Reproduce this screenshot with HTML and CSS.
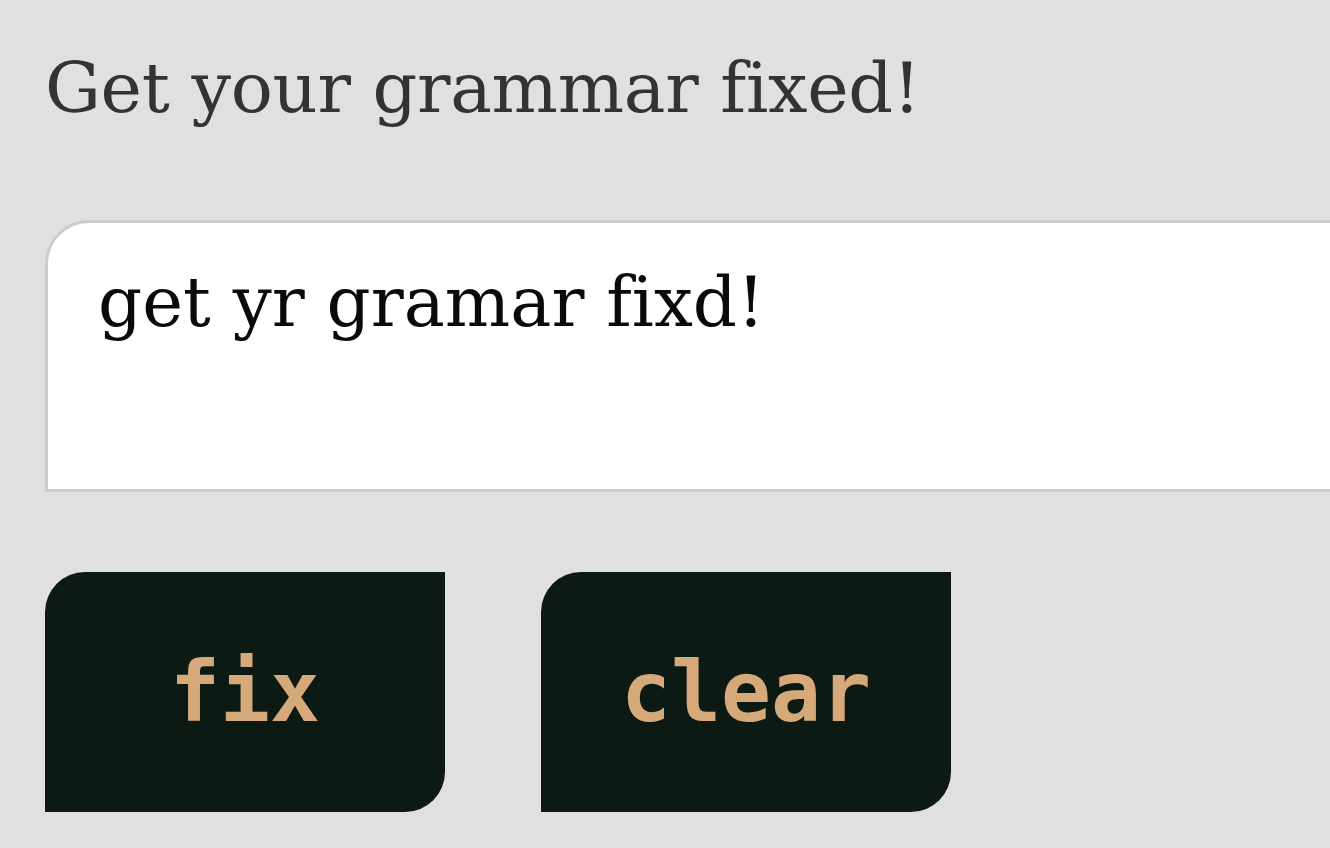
FILE: index.html
```html
<!DOCTYPE html>
<html lang="en">
<head>
<meta charset="utf-8">
<title>Grammar fixer</title>
<link rel="stylesheet" href="styles.css">
</head>
<body>
<main class="app">
  <h1 class="title">Get your grammar fixed!</h1>
  <textarea class="input" spellcheck="false">get yr gramar fixd!</textarea>
  <div class="actions">
    <button class="btn" type="button">fix</button>
    <button class="btn" type="button">clear</button>
  </div>
</main>
</body>
</html>
```

FILE: styles.css
```css
html, body {
  margin: 0;
  padding: 0;
  overflow: hidden;
  background: #e0e0e0;
}

.app {
  display: flex;
  flex-direction: column;
  align-items: flex-start;
  padding: 38px 0 0 45px;
}

.title {
  margin: 0;
  font-family: "DejaVu Serif", serif;
  font-weight: normal;
  font-size: 70px;
  line-height: 100px;
  color: #333333;
  letter-spacing: -0.3px;
  font-variant-ligatures: none;
}

.input {
  box-sizing: border-box;
  margin-top: 82px;
  width: 1320px;
  height: 272px;
  padding: 39px 50px;
  border: 3px solid #cccccc;
  border-radius: 44px 0 0 0;
  background: #ffffff;
  font-family: "DejaVu Serif", serif;
  font-size: 69px;
  line-height: 80px;
  color: #0a0a0a;
  font-variant-ligatures: none;
  resize: none;
  outline: none;
  overflow: hidden;
}

.actions {
  display: flex;
  gap: 96px;
  margin-top: 80px;
}

.btn {
  box-sizing: border-box;
  min-width: 400px;
  height: 240px;
  padding: 0 80px;
  border: none;
  border-radius: 40px 0 40px 0;
  background: #0d1a14;
  color: #d6a97b;
  font-family: "DejaVu Sans Mono", monospace;
  font-weight: bold;
  font-size: 83px;
  cursor: pointer;
}
```
